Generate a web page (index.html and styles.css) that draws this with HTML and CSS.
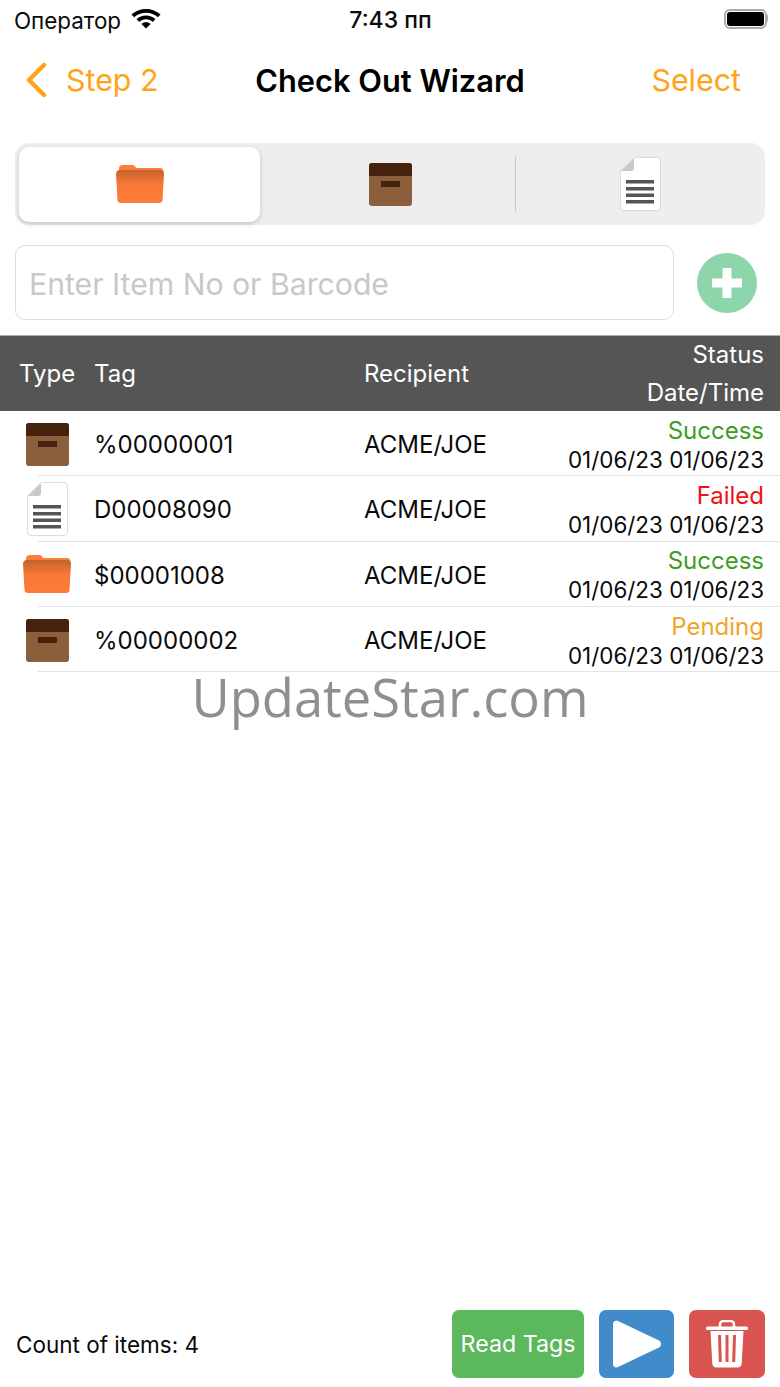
FILE: index.html
```html
<!DOCTYPE html>
<html lang="en">
<head>
    <meta charset="UTF-8">
    <meta name="viewport" content="width=device-width, initial-scale=1.0">
    <title>Check Out Wizard</title>
    <link rel="stylesheet" href="styles.css">
</head>
<body>

    <svg class="defs" width="0" height="0">
        <defs>
            <linearGradient id="folder-shade" x1="0" y1="0" x2="0" y2="1">
                <stop offset="0" stop-color="#c4622b"/>
                <stop offset="0.45" stop-color="#f97937"/>
                <stop offset="1" stop-color="#fd7b38"/>
            </linearGradient>
            <symbol id="icon-folder" viewBox="0 0 48 38">
                <path d="M3 8V3.500C3 1.500 4.500 0 6.500 0H16c2 0 3 .8 4 3h24c2 0 3.500 1.500 3.500 3.500V10H3z" fill="#fb7e3c"/>
                <path d="M0 9c0-2.500 1.500-4 4-4h40c2.500 0 4 1.500 4 4l-1.500 26c-.1 2-1.400 3-3.300 3H4.800C2.900 38 1.600 37 1.500 35z" fill="url(#folder-shade)"/>
            </symbol>
            <symbol id="icon-box" viewBox="0 0 43 43">
                <rect width="43" height="43" rx="3" fill="#8b5e3c"/>
                <path d="M0 13V3a3 3 0 0 1 3-3h37a3 3 0 0 1 3 3v10z" fill="#46230f"/>
                <rect x="12" y="18" width="19" height="6" fill="#46230f"/>
            </symbol>
            <symbol id="icon-doc" viewBox="0 0 41 54">
                <path d="M14 .5h23a3.500 3.500 0 0 1 3.500 3.500v46a3.500 3.500 0 0 1-3.500 3.500H4A3.500 3.500 0 0 1 .5 50V14z" fill="#fff" stroke="#dcdcdc"/>
                <path d="M1 14 14 1v10c0 2-1 3-3 3z" fill="#c9c9c9"/>
                <g fill="#555">
                    <rect x="6" y="23" width="28" height="3.500"/>
                    <rect x="6" y="30" width="28" height="3.500"/>
                    <rect x="6" y="36.500" width="28" height="3.500"/>
                    <rect x="6" y="43" width="28" height="3.500"/>
                </g>
            </symbol>
        </defs>
    </svg>

    <div class="status-bar">
        <div class="carrier">
            <span>Оператор</span>
            <svg class="wifi" viewBox="0 0 28 20" width="30" height="20" preserveAspectRatio="none">
                <path d="M14 0C8.800 0 4 2 .4 5.500L3 8.200C6 5.300 9.800 3.700 14 3.700s8 1.600 11 4.500l2.600-2.700C24 2 19.200 0 14 0z" fill="#000"/>
                <path d="M14 6.600c-3.400 0-6.500 1.300-8.800 3.600l2.600 2.700c1.600-1.600 3.800-2.600 6.200-2.600s4.600 1 6.200 2.600l2.600-2.700c-2.300-2.300-5.400-3.600-8.800-3.600z" fill="#000"/>
                <path d="M14 13.200c-1.700 0-3.200.7-4.300 1.700L14 19.600l4.300-4.700c-1.100-1-2.600-1.700-4.300-1.700z" fill="#000"/>
            </svg>
        </div>
        <div class="clock">7:43 пп</div>
        <div class="battery"><div class="battery-level"></div></div>
    </div>

    <div class="nav-bar">
        <a class="nav-back">
            <svg viewBox="0 0 22 36" width="22" height="36">
                <path d="M19 3 4 18l15 15" fill="none" stroke="#ffa31a" stroke-width="4.500" stroke-linecap="round" stroke-linejoin="round"/>
            </svg>
            <span>Step 2</span>
        </a>
        <div class="nav-title">Check Out Wizard</div>
        <a class="nav-action">Select</a>
    </div>

    <div class="segments">
        <div class="segment selected"><svg class="seg-folder"><use href="#icon-folder"/></svg></div>
        <div class="segment"><svg class="seg-box"><use href="#icon-box"/></svg></div>
        <div class="segment divided"><svg class="seg-doc"><use href="#icon-doc"/></svg></div>
    </div>

    <div class="entry">
        <div class="entry-input">Enter Item No or Barcode</div>
        <div class="add-button">
            <svg viewBox="0 0 30 30" width="30" height="30">
                <path d="M10.500 0h9v10.500H30v9H19.500V30h-9V19.500H0v-9h10.500z" fill="#fff"/>
            </svg>
        </div>
    </div>

    <div class="list-head">
        <div>Type</div>
        <div>Tag</div>
        <div>Recipient</div>
        <div class="status-cell">
            <div>Status</div>
            <div>Date/Time</div>
        </div>
    </div>

    <div class="row">
        <div class="type-cell"><svg class="row-box"><use href="#icon-box"/></svg></div>
        <div>%00000001</div>
        <div>ACME/JOE</div>
        <div class="status-cell">
            <div class="status success">Success</div>
            <div class="stamp">01/06/23 01/06/23</div>
        </div>
    </div>
    <div class="row">
        <div class="type-cell"><svg class="row-doc"><use href="#icon-doc"/></svg></div>
        <div>D00008090</div>
        <div>ACME/JOE</div>
        <div class="status-cell">
            <div class="status failed">Failed</div>
            <div class="stamp">01/06/23 01/06/23</div>
        </div>
    </div>
    <div class="row">
        <div class="type-cell"><svg class="row-folder"><use href="#icon-folder"/></svg></div>
        <div>$00001008</div>
        <div>ACME/JOE</div>
        <div class="status-cell">
            <div class="status success">Success</div>
            <div class="stamp">01/06/23 01/06/23</div>
        </div>
    </div>
    <div class="row">
        <div class="type-cell"><svg class="row-box"><use href="#icon-box"/></svg></div>
        <div>%00000002</div>
        <div>ACME/JOE</div>
        <div class="status-cell">
            <div class="status pending">Pending</div>
            <div class="stamp">01/06/23 01/06/23</div>
        </div>
    </div>

    <div class="watermark">UpdateStar.com</div>

    <div class="footer">
        <div class="count">Count of items: 4</div>
        <div class="actions">
            <button class="btn btn-read">Read Tags</button>
            <button class="btn btn-play">
                <svg viewBox="0 0 50 48" width="50" height="48">
                    <path d="M1 4C1 1 3.500 0 6 1l41 19.500c2.700 1.300 2.700 5.700 0 7L6 47c-2.500 1-5 0-5-3z" fill="#fff"/>
                </svg>
            </button>
            <button class="btn btn-trash">
                <svg viewBox="0 0 42 48" width="42" height="48">
                    <path d="M14 7V4.500C14 2.500 15.500 1 17.500 1h7C26.500 1 28 2.500 28 4.500V7" fill="none" stroke="#fff" stroke-width="2.500"/>
                    <rect x="0" y="6.500" width="42" height="3.500" rx="1.500" fill="#fff"/>
                    <path fill-rule="evenodd" d="M4.500 11h33l-1.800 32.500c-.1 2.500-1.700 4-4 4H10.300c-2.300 0-3.900-1.500-4-4zM12 15l.8 27h3L15 15zm7.500 0v27h3V15zM27 15l-.8 27h3l.8-27z" fill="#fff"/>
                </svg>
            </button>
        </div>
    </div>

</body>
</html>
```

FILE: styles.css
```css
body {
    margin: 0;
    height: 1387px;
    display: flex;
    flex-direction: column;
    background: #fff;
    color: #0a0a0a;
    font-family: Inter, "Noto Sans", sans-serif;
    overflow: hidden;
}

.defs {
    display: block;
    height: 0;
}

/* status bar */
.status-bar {
    height: 40px;
    display: grid;
    grid-template-columns: 1fr auto 1fr;
    align-items: center;
    padding: 0 13px 0 14px;
    font-size: 22.4px;
}

.carrier {
    display: flex;
    align-items: center;
    gap: 10px;
}

.wifi {
    margin-bottom: 2px;
}

.clock {
    font-size: 23px;
    font-weight: 500;
}

.battery {
    justify-self: end;
    width: 37px;
    height: 14px;
    padding: 1px;
    margin-bottom: 3px;
    border: 2px solid #aaa;
    border-radius: 6px;
    position: relative;
}

.battery::after {
    content: "";
    position: absolute;
    left: 40px;
    top: 3px;
    width: 2px;
    height: 8px;
    background: #aaa;
    border-radius: 0 2px 2px 0;
}

.battery-level {
    height: 100%;
    background: #000;
    border-radius: 3px;
}

/* nav */
.nav-bar {
    height: 80px;
    display: grid;
    grid-template-columns: 1fr auto 1fr;
    align-items: center;
    padding: 0 39px;
    font-size: 30.4px;
}

.nav-back {
    display: flex;
    align-items: center;
    gap: 19px;
    margin-left: -14px;
    color: #ffa31a;
}

.nav-title {
    font-size: 30.8px;
    font-weight: 600;
    color: #000;
}

.nav-action {
    justify-self: end;
    color: #ffa31a;
}

/* segmented control */
.segments {
    margin: 23px 15px 0;
    height: 82px;
    background: #eee;
    border-radius: 14px;
    display: grid;
    grid-template-columns: repeat(3, 250px);
}

.segment {
    display: flex;
    align-items: center;
    justify-content: center;
}

.segment.selected {
    margin: 4px 5px 3px 4px;
    background: #fff;
    border-radius: 10px;
    box-shadow: 0 2px 5px rgba(0, 0, 0, 0.18);
}

.segment.divided {
    margin: 13px 0;
    border-left: 1px solid #c8c8c8;
}

.seg-folder { width: 48px; height: 38px; margin-bottom: 2px; }
.seg-box { width: 43px; height: 43px; }
.seg-doc { width: 41px; height: 54px; }

/* item entry */
.entry {
    margin: 20px 15px 0;
    display: flex;
    align-items: center;
    gap: 23px;
}

.entry-input {
    flex: 1;
    height: 73px;
    line-height: 76px;
    padding-left: 13px;
    border: 1px solid #ddd;
    border-radius: 10px;
    font-size: 30.2px;
    color: #c8c8c8;
}

.add-button {
    width: 60px;
    height: 60px;
    margin-right: 8px;
    border-radius: 50%;
    background: #8dd5aa;
    display: flex;
    align-items: center;
    justify-content: center;
}

/* list */
.list-head, .row {
    display: grid;
    grid-template-columns: 94px 270px 1fr auto;
    align-items: center;
    padding-right: 16px;
}

.list-head {
    margin-top: 15px;
    height: 75px;
    background: #555;
    border-top: 1px solid #aaa;
    color: #fff;
    font-size: 24px;
    line-height: 38px;
}

.list-head > div:first-child {
    padding-left: 19px;
}

.row {
    box-sizing: border-box;
    height: 65.3px;
    padding-top: 2px;
    font-size: 24px;
    background: linear-gradient(#e2e2e2, #e2e2e2) 38px 100% / 100% 1px no-repeat;
}

.type-cell {
    display: flex;
    justify-content: center;
}

.row-box { width: 43px; height: 43px; }
.row-doc { width: 41px; height: 54px; margin-top: -2px; }
.row-folder { width: 48px; height: 38px; margin-top: -2px; }

.status-cell {
    text-align: right;
    grid-column: 4;
}

.row .status-cell {
    line-height: 29px;
}

.stamp {
    font-size: 22.4px;
}

.success { color: #3c9e1f; }
.failed { color: #f01010; }
.pending { color: #f0a428; }

.watermark {
    text-align: center;
    font-family: "Open Sans", sans-serif;
    font-size: 52.5px;
    line-height: 50px;
    color: #8f8f8f;
}

/* footer */
.footer {
    margin-top: auto;
    padding: 0 15px 9px 16px;
    display: flex;
    align-items: center;
    justify-content: space-between;
}

.count {
    font-size: 22.5px;
}

.actions {
    display: flex;
    gap: 15px;
}

.btn {
    height: 68px;
    width: 76px;
    padding: 0;
    border: 0;
    border-radius: 7px;
    color: #fff;
    font-family: inherit;
    font-size: 23.2px;
    display: flex;
    align-items: center;
    justify-content: center;
}

.btn-read {
    width: 132px;
    background: #5cb85c;
}

.btn-play {
    width: 75px;
    background: #428bca;
}

.btn-trash {
    background: #d9534f;
}
```
